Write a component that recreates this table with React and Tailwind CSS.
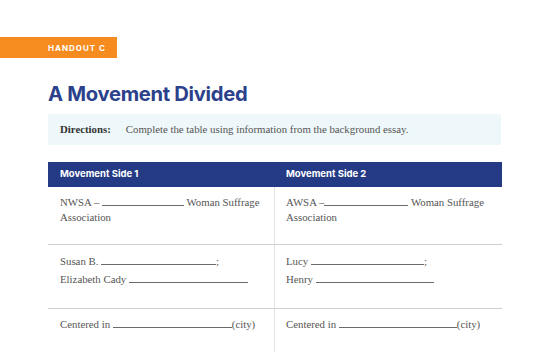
const serif = { fontFamily: '"Liberation Serif", "DejaVu Serif", serif' }

function Blank({ w }) {
  return <span className={`inline-block border-b border-[#6b6b6b] h-[2px] align-baseline ${w}`} />
}

export default function App() {
  return (
    <div className="w-[550px] h-[352px] overflow-hidden bg-white font-['Inter',sans-serif]">
      {/* tab */}
      <div className="pt-[37px]">
        <div className="w-[117px] h-[21px] bg-[#f68b1f] flex items-center pl-[48px]">
          <span className="text-[8px] font-bold tracking-[1px] text-white">HANDOUT C</span>
        </div>
      </div>

      <div className="px-[48px]">
        <h1 className="mt-[23px] text-[20.2px] leading-[26px] font-bold text-[#2c418c] tracking-[-0.3px]">
          A Movement Divided
        </h1>

        <div className="mt-[7px] w-[453px] h-[31px] bg-[#eef7f9] flex items-center pl-[12px] text-[10.8px]" style={serif}>
          <span className="font-bold text-[#333]">Directions:</span>
          <span className="ml-[15px] text-[#555]">Complete the table using information from the background essay.</span>
        </div>

        {/* table */}
        <div className="mt-[17px] w-[454px]">
          <div className="grid grid-cols-[227px_227px] h-[25px] bg-[#243a85] text-white text-[9.5px] font-bold">
            <div className="pl-[12px] flex items-center">Movement Side 1</div>
            <div className="pl-[11px] flex items-center">Movement Side 2</div>
          </div>

          <div className="grid grid-cols-[227px_227px] text-[10.8px] text-[#555]" style={serif}>
            <div className="h-[58px] border-b border-[#cfcfcf] border-r border-r-[#e2e2e2] pl-[12px] pr-[10px] pt-[8px] leading-[15px]">
              NWSA – <Blank w="w-[82px]" /> Woman Suffrage Association
            </div>
            <div className="h-[58px] border-b border-[#cfcfcf] pl-[11px] pr-[10px] pt-[8px] leading-[15px]">
              AWSA –<Blank w="w-[84px]" /> Woman Suffrage Association
            </div>

            <div className="h-[64px] border-b border-[#cfcfcf] border-r border-r-[#e2e2e2] pl-[12px] pt-[9px] leading-[15px] flex flex-col gap-[3px]">
              <div>Susan B. <Blank w="w-[115px]" />;</div>
              <div>Elizabeth Cady <Blank w="w-[119px]" /></div>
            </div>
            <div className="h-[64px] border-b border-[#cfcfcf] pl-[11px] pt-[9px] leading-[15px] flex flex-col gap-[3px]">
              <div>Lucy <Blank w="w-[113px]" />;</div>
              <div>Henry <Blank w="w-[118px]" /></div>
            </div>

            <div className="h-[60px] border-r border-r-[#e2e2e2] pl-[12px] pt-[8px] leading-[15px]">
              Centered in <Blank w="w-[119px]" />(city)
            </div>
            <div className="h-[60px] pl-[11px] pt-[8px] leading-[15px]">
              Centered in <Blank w="w-[118px]" />(city)
            </div>
          </div>
        </div>
      </div>
    </div>
  )
}
